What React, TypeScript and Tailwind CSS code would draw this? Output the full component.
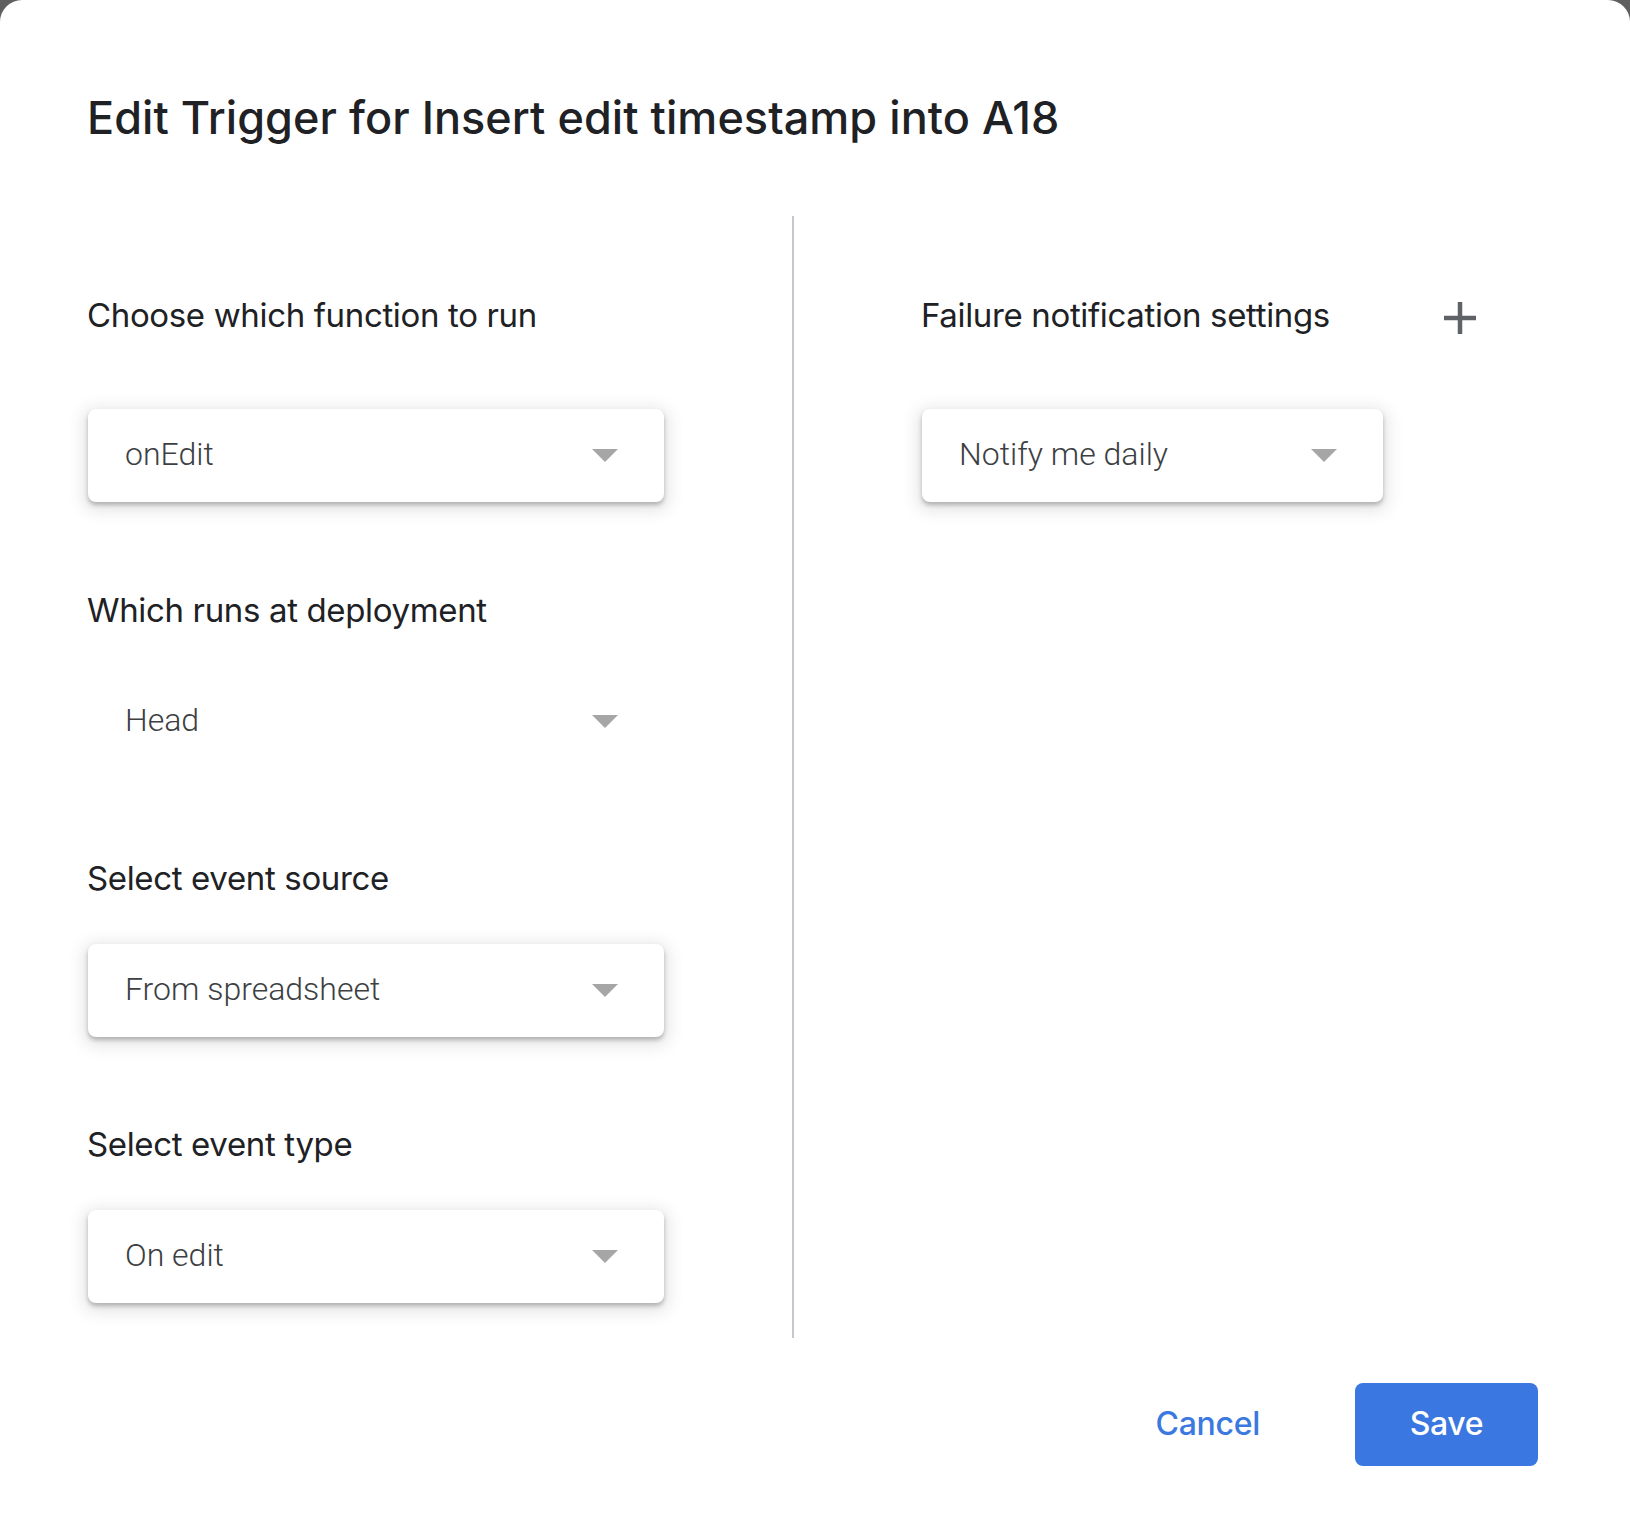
import React from "react"

const heading = "font-['Inter','Open_Sans',sans-serif]"

function Arrow() {
  return (
    <svg width="26" height="13" viewBox="0 0 26 13" className="shrink-0">
      <polygon points="0,0 26,0 13,13" fill="#a6a6a6" />
    </svg>
  )
}

function Select({ value, flat = false }: { value: string; flat?: boolean }) {
  return (
    <div
      className={
        "ml-px flex h-[93px] items-center justify-between rounded-[8px] bg-white pl-[37px] pr-[46px] " +
        (flat ? "" : "shadow-[0_3px_4px_rgba(60,64,67,0.33),0_4px_16px_5px_rgba(60,64,67,0.13)]")
      }
    >
      <span className="mb-[3px] font-['Roboto',sans-serif] text-[32px] font-light leading-none text-[#3c4043]">
        {value}
      </span>
      <Arrow />
    </div>
  )
}

function Label({ children }: { children: React.ReactNode }) {
  return (
    <div className={`${heading} h-[48px] text-[33px] leading-[48px] tracking-[-0.35px] text-[#202124]`}>
      {children}
    </div>
  )
}

export default function App() {
  return (
    <div className="h-[1540px] w-full bg-[#5f5f5f]">
      <div className="flex h-full flex-col rounded-t-[22px] bg-white pl-[87px] pr-[92px]">
        {/* Title */}
        <h1
          className={`${heading} mt-[91px] h-[54px] text-[45px] font-medium leading-[54px] tracking-[0.05px] text-[#202124]`}
        >
          Edit Trigger for Insert edit timestamp into A18
        </h1>

        {/* Columns */}
        <div className="mt-[71px] flex">
          <div className="flex w-[705px] flex-col pb-[35px] pr-[128px] pt-[75px]">
            <Label>Choose which function to run</Label>
            <div className="mt-[70px]">
              <Select value="onEdit" />
            </div>

            <div className="mt-[84px]">
              <Label>Which runs at deployment</Label>
            </div>
            <div className="mt-[41px]">
              <Select value="Head" flat />
            </div>

            <div className="mt-[86px]">
              <Label>Select event source</Label>
            </div>
            <div className="mt-[42px]">
              <Select value="From spreadsheet" />
            </div>

            <div className="mt-[83px]">
              <Label>Select event type</Label>
            </div>
            <div className="mt-[42px]">
              <Select value="On edit" />
            </div>
          </div>

          <div className="w-[2px] bg-[#c4c7cb]" />

          <div className="flex flex-1 flex-col pl-[127px] pt-[75px]">
            <div className="flex items-center">
              <div className="w-[522px]">
                <Label>Failure notification settings</Label>
              </div>
              <svg width="34" height="34" viewBox="0 0 34 34" className="mt-[6px]">
                <path d="M17 1v32M1 17h32" stroke="#5f6368" strokeWidth="4.5" />
              </svg>
            </div>
            <div className="mt-[70px] w-[462px]">
              <Select value="Notify me daily" />
            </div>
          </div>
        </div>

        {/* Footer buttons */}
        <div className="mt-[45px] flex items-center justify-end gap-[95px]">
          <button className={`${heading} pb-[2px] text-[32px] font-medium tracking-[-0.3px] text-[#3b78e0]`}>
            Cancel
          </button>
          <button
            className={`${heading} h-[83px] w-[183px] rounded-[8px] bg-[#3b77e0] pb-[2px] text-[32px] font-medium tracking-[-0.3px] text-white`}
          >
            Save
          </button>
        </div>
      </div>
    </div>
  )
}
